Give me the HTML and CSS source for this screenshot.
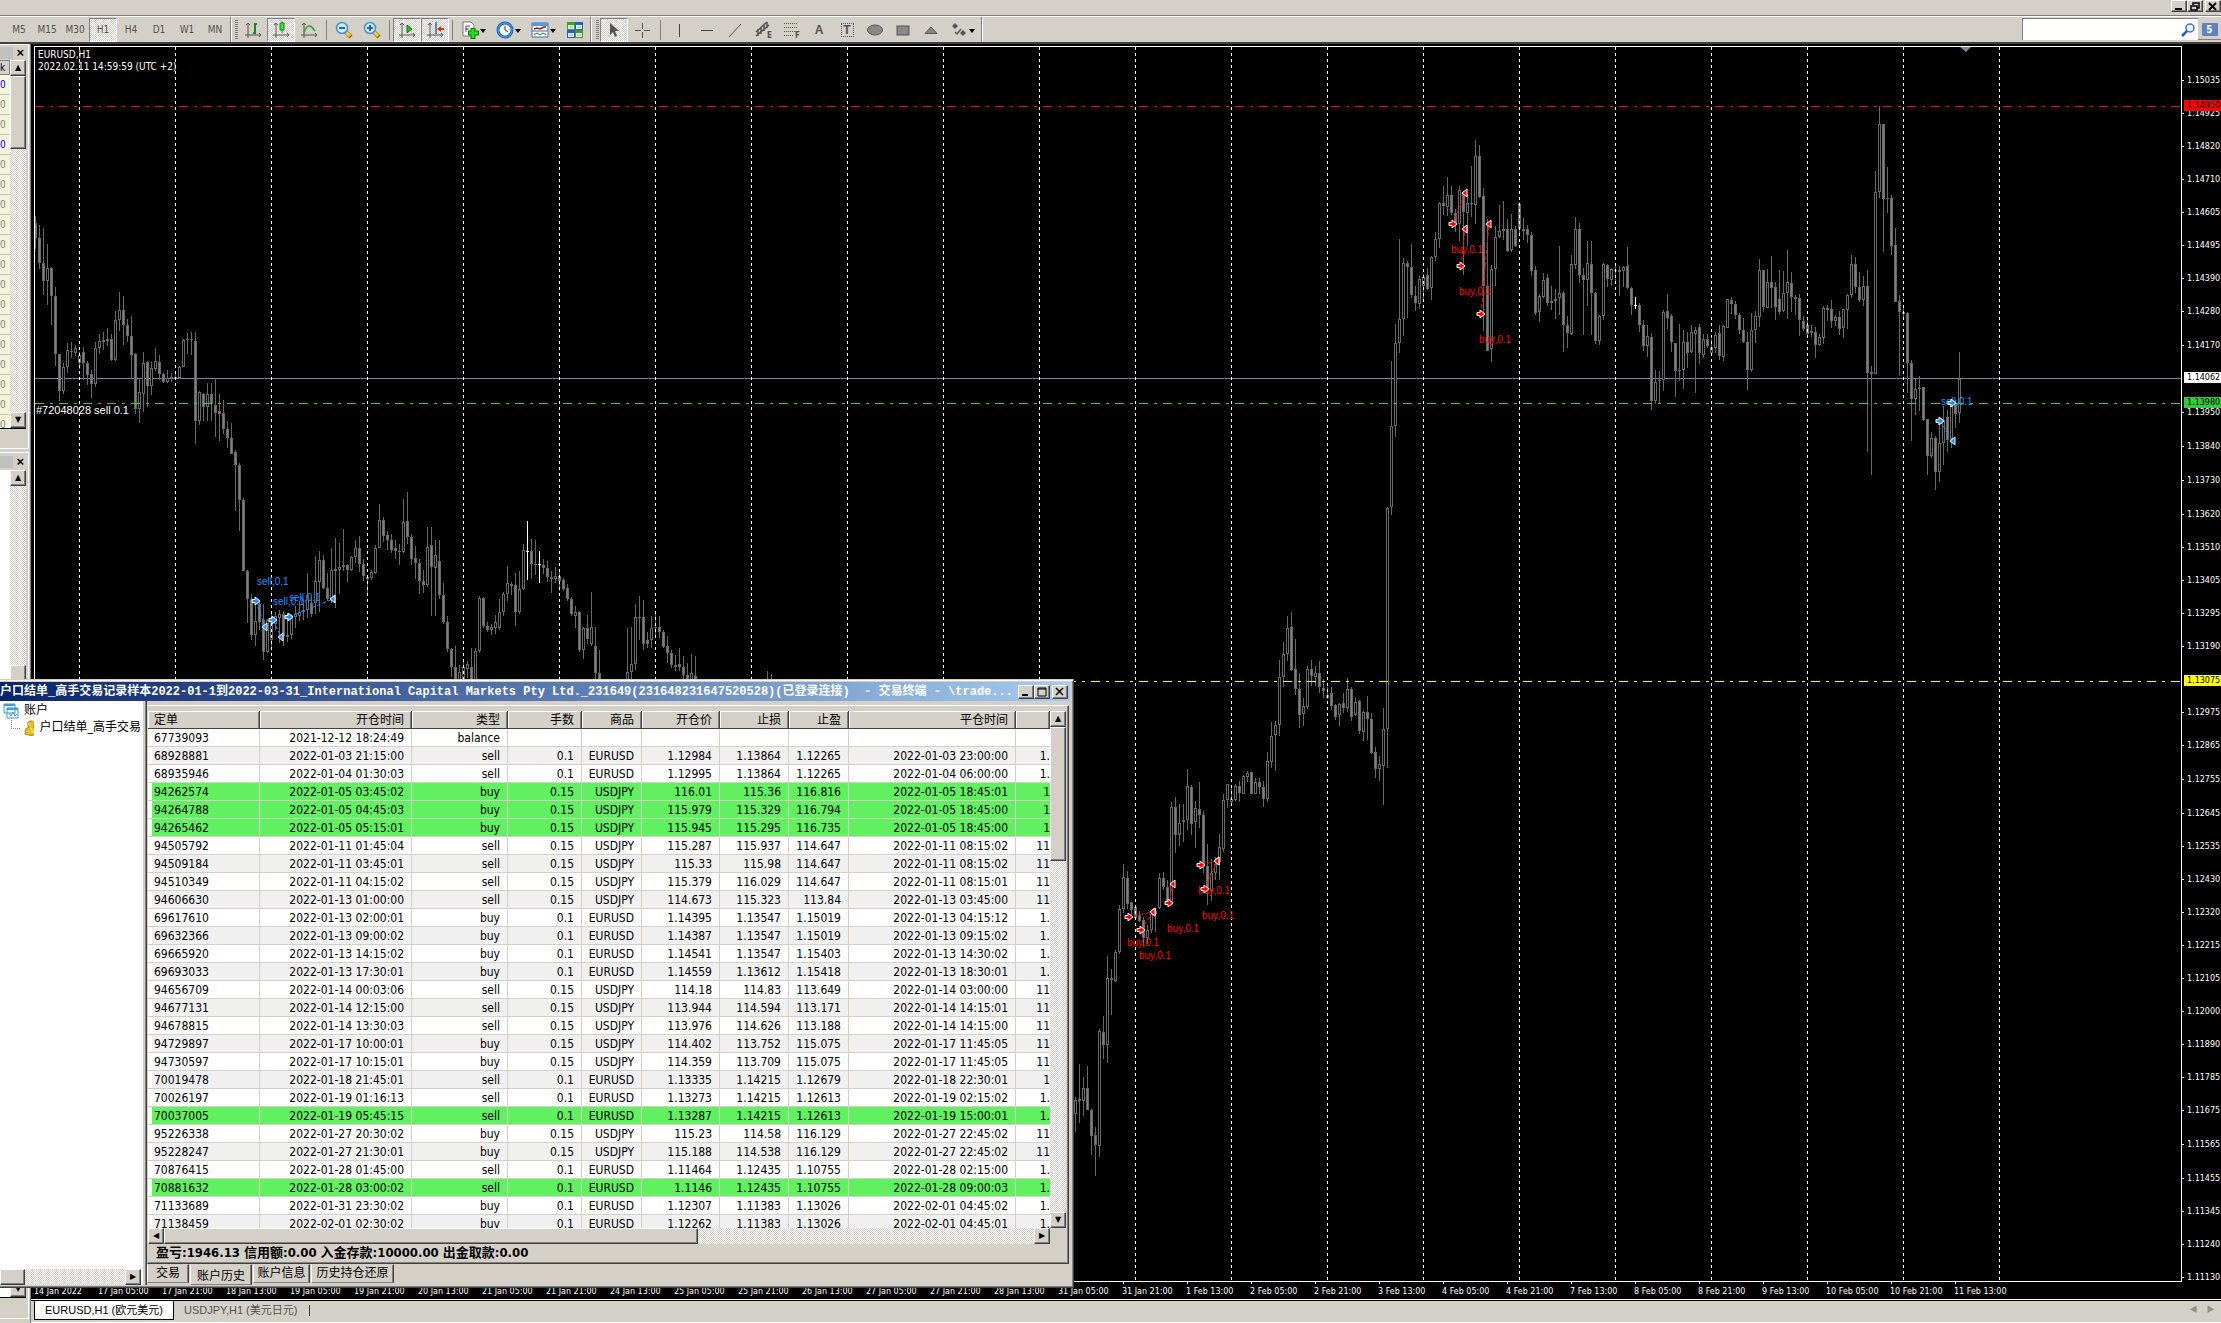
FILE: index.html
```html
<!DOCTYPE html>
<html lang="zh-CN">
<head>
<meta charset="utf-8">
<title>EURUSD,H1</title>
<link rel="stylesheet" href="styles.css">
</head>
<body>
<header class="caption">
  <button class="win" aria-label="Minimize"><svg width="10" height="8"><path d="M1 7h7" stroke="#000" stroke-width="2"/></svg></button>
  <button class="win" aria-label="Restore"><svg width="10" height="9"><path d="M3 3V1h6v5H7M3 1h6M1 4h6v4H1z" fill="none" stroke="#000" stroke-width="1.5"/></svg></button>
  <button class="win gap" aria-label="Close"><svg width="10" height="9"><path d="M1 1l7 7M8 1L1 8" stroke="#000" stroke-width="2"/></svg></button>
</header>
<nav class="toolbar">
  <div class="group first">
    <button>M5</button><button>M15</button><button>M30</button><button class="on">H1</button><button>H4</button><button>D1</button><button>W1</button><button>MN</button>
  </div>
  <div class="group">
    <i class="grip"></i>
    <button aria-label="Bar chart"><svg width="18" height="18"><path d="M4 2v15M1 14h16M2 4l2-2 2 2M15 12l2 2-2 2" fill="none" stroke="#555"/><path d="M9 12h2V3h2" fill="none" stroke="#188a18" stroke-width="2"/></svg></button>
    <button class="on" aria-label="Candlesticks"><svg width="18" height="18"><path d="M4 2v15M1 14h16M2 4l2-2 2 2M15 12l2 2-2 2" fill="none" stroke="#555"/><path d="M10 0v12" stroke="#188a18"/><path d="M8 2h4v7H8z" fill="#3fdc3f" stroke="#188a18"/></svg></button>
    <button aria-label="Line chart"><svg width="18" height="18"><path d="M4 2v15M1 14h16M2 4l2-2 2 2M15 12l2 2-2 2" fill="none" stroke="#555"/><path d="M4 12q4-13 11-2" fill="none" stroke="#3a9a3a" stroke-width="1.5"/></svg></button>
    <i class="sep"></i>
    <button aria-label="Zoom out"><svg width="18" height="18"><path d="M10 10l6 6" stroke="#8a6a10" stroke-width="4"/><path d="M10 10l5 5" stroke="#f0d040" stroke-width="3"/><circle cx="7" cy="7" r="5.5" fill="#c6ecff" stroke="#4a90c8" stroke-width="1.5"/><path d="M4 7h6" stroke="#2468a8" stroke-width="2"/></svg></button>
    <button aria-label="Zoom in"><svg width="18" height="18"><path d="M10 10l6 6" stroke="#8a6a10" stroke-width="4"/><path d="M10 10l5 5" stroke="#f0d040" stroke-width="3"/><circle cx="7" cy="7" r="5.5" fill="#c6ecff" stroke="#4a90c8" stroke-width="1.5"/><path d="M4 7h6M7 4v6" stroke="#2468a8" stroke-width="2"/></svg></button>
    <i class="sep"></i>
    <button class="on" aria-label="Auto scroll"><svg width="18" height="18"><path d="M4 2v15M1 14h16M2 4l2-2 2 2M15 12l2 2-2 2" fill="none" stroke="#555"/><path d="M9 4l5 4-5 4z" fill="#2cc02c" stroke="#127012"/></svg></button>
    <button class="on" aria-label="Chart shift"><svg width="18" height="18"><path d="M4 2v15M1 14h16M2 4l2-2 2 2M15 12l2 2-2 2" fill="none" stroke="#555"/><path d="M10 1v12" stroke="#2070a0" stroke-width="1.5"/><path d="M18 7h-3V5l-4 3 4 3V9h3z" fill="#c03810"/></svg></button>
    <i class="sep"></i>
    <button class="drop" aria-label="Indicators"><svg width="18" height="18"><path d="M2 1h8l3 3v11H2z" fill="#fff" stroke="#777"/><path d="M5 11V5h4M4 8h4" fill="none" stroke="#555"/><path d="M12 7v11M7 12h11" stroke="#0a7a0a" stroke-width="5"/><path d="M12 8v9M8 12h9" stroke="#28d828" stroke-width="3"/></svg></button>
    <button class="drop" aria-label="Periods"><svg width="18" height="18"><circle cx="9" cy="9" r="7" fill="#fff" stroke="#1860c0" stroke-width="3"/><circle cx="9" cy="9" r="7" fill="none" stroke="#5aa8f0"/><path d="M9 5v4l3 2" fill="none" stroke="#333"/></svg></button>
    <button class="drop" aria-label="Templates"><svg width="18" height="18"><path d="M1 2h16v14H1z" fill="#fff" stroke="#3070b0"/><path d="M1 2h16v3H1z" fill="#5898e0"/><path d="M1 10h16" stroke="#3070b0"/><path d="M3 8l3-1 3 1 4-2h2" fill="none" stroke="#902010" stroke-width="1.5"/><path d="M3 14l3-2 3 2 3-2 3 2" fill="none" stroke="#188a18"/></svg></button>
    <button aria-label="Tile windows"><svg width="18" height="18"><path d="M1 1h8v8H1zM9 9h8v8H9z" fill="#40a010"/><path d="M9 1h8v8H9zM1 9h8v8H1z" fill="#2060d0"/><path d="M2 4h6v4H2zM10 4h6v4h-6zM2 12h6v4H2zM10 12h6v4h-6z" fill="#e8f4ff"/><path d="M3 6h4M11 6h4M3 14h4M11 14h4" stroke="#8ab"/></svg></button>
  </div>
  <div class="group draw">
    <i class="grip"></i>
    <button class="on" aria-label="Cursor"><svg width="18" height="18"><path d="M5 2v12l3-3 2 5 2-1-2-5h4z" fill="#555"/></svg></button>
    <button aria-label="Crosshair"><svg width="18" height="18"><path d="M9.500 2v6M9.500 11v6M2 9.500h6M11 9.500h6" stroke="#555"/></svg></button>
    <i class="sep"></i>
    <button aria-label="Vertical line"><svg width="18" height="18"><path d="M9.500 3v13" stroke="#444"/></svg></button>
    <button aria-label="Horizontal line"><svg width="18" height="18"><path d="M3 9.500h12" stroke="#444"/></svg></button>
    <button aria-label="Trendline"><svg width="18" height="18"><path d="M3 16L15 3" stroke="#555"/></svg></button>
    <button aria-label="Equidistant channel"><svg width="18" height="18"><path d="M2 11L13 1M2 15L15 4M4 8v7M7 6v7M10 3v7M13 1v6" stroke="#555" stroke-width="1.500"/></svg><small>E</small></button>
    <button aria-label="Fibonacci"><svg width="18" height="18"><path d="M2 2.500h14M2 6.500h14M2 10.500h14M2 14.500h9" stroke="#555" stroke-dasharray="1 1"/></svg><small>F</small></button>
    <button class="letter">A</button>
    <button class="letter"><span class="dots">T</span></button>
    <button aria-label="Ellipse"><svg width="18" height="18"><ellipse cx="9" cy="9" rx="7.500" ry="5" fill="#888" stroke="#555"/></svg></button>
    <button aria-label="Rectangle"><svg width="18" height="18"><rect x="3" y="5" width="12" height="9" fill="#888" stroke="#555"/></svg></button>
    <button aria-label="Triangle"><svg width="18" height="18"><path d="M9 6l6 6.500H3z" fill="#888" stroke="#555"/></svg></button>
    <button class="drop" aria-label="Arrows"><svg width="18" height="18"><path d="M5 2l3 3-3 3-3-3zM13 9l3 3-3 3-3-3z" fill="#555"/><path d="M5 11l2 2 4-5" fill="none" stroke="#555" stroke-width="1.500"/></svg></button>
  </div>
  <label class="search"><input type="text" aria-label="Search"><svg width="14" height="14"><circle cx="9" cy="5" r="4" fill="#e8f2ff" stroke="#3a6fd0" stroke-width="1.500"/><path d="M6 8l-5 5" stroke="#2a52c0" stroke-width="2.500"/></svg></label>
  <button class="badge" aria-label="5 messages"><span>5</span></button>
</nav>
<main class="workspace">
  <aside class="dock">
    <section class="panel watch">
      <div class="panel-title"><i></i><button aria-label="Close">×</button></div>
      <div class="panel-body">
        <div class="cells" id="cells"><span class="head">k</span></div>
        <div class="vbar"><button class="arrow" aria-label="Up">▲</button><i class="thumb top"></i><i class="space"></i><button class="arrow" aria-label="Down">▼</button></div>
      </div>
    </section>
    <section class="panel nav">
      <div class="panel-title"><i></i><button aria-label="Close">×</button></div>
      <div class="panel-body">
        <div class="cells blank"></div>
        <div class="vbar"><button class="arrow" aria-label="Up">▲</button><i class="space upper"></i><i class="thumb"></i><i class="space"></i><button class="arrow" aria-label="Down">▼</button></div>
      </div>
    </section>
  </aside>
  <div class="stage">
    <svg class="chart" id="chart" role="img" aria-label="EURUSD H1"></svg>
    <nav class="tabs"><a class="tab current" href="#eurusd">EURUSD,H1 (欧元美元)</a><a class="tab" href="#usdjpy">USDJPY,H1 (美元日元)</a><i class="bar"></i><span class="scroll">◀</span><span class="scroll">▶</span></nav>
  </div>
</main>
<section class="terminal">
  <header class="titlebar">
    <h1>户口结单_高手交易记录样本2022-01-1到2022-03-31_International Capital Markets Pty Ltd._231649(231648231647520528)(已登录连接)&nbsp; - 交易终端 - \trade...</h1>
    <button class="win" aria-label="Minimize"><svg width="10" height="9"><path d="M1 8h6" stroke="#000" stroke-width="2"/></svg></button>
    <button class="win" aria-label="Maximize"><svg width="10" height="10"><path d="M1 1h8v8H1zM1 2h8" fill="none" stroke="#000"/></svg></button>
    <button class="win gap" aria-label="Close"><svg width="10" height="9"><path d="M1 1l7 7M8 1L1 8" stroke="#000" stroke-width="1.500"/></svg></button>
  </header>
  <div class="split">
    <div class="tree">
      <ul>
        <li><svg width="16" height="16"><path d="M1 1h11v9H1zM4 5h11v10H4z" fill="#eef7ff" stroke="#4a9ad4"/><path d="M1 1h11v2H1zM4 5h11v2H4z" fill="#4a9ad4"/><path d="M6 10l2 3 2-4 2 4 2-2" fill="none" stroke="#4a9ad4"/></svg>账户</li>
        <li class="child"><svg width="14" height="16"><path d="M7 1c4 0 4 4 2 6 3 1 4 3 4 7q-6 3-12 0c0-4 1-6 4-7C3 5 3 1 7 1z" fill="#e8c020" stroke="#a88408"/><path d="M7 8l3 6M5 3q-1 2 1 3" stroke="#fff2a0" fill="none"/></svg>户口结单_高手交易</li>
      </ul>
      <div class="hbar"><i class="thumb"></i><i class="space"></i><button class="arrow" aria-label="Right">▶</button></div>
    </div>
    <div class="divider"></div>
    <div class="pane">
      <div class="frame">
        <div class="grid">
          <div class="rows">
            <table>
              <colgroup><col class="c1"><col class="c2"><col class="c3"><col class="c4"><col class="c5"><col class="c6"><col class="c7"><col class="c5"><col class="c9"><col></colgroup>
              <thead><tr><th>定单</th><th>开仓时间</th><th>类型</th><th>手数</th><th>商品</th><th>开仓价</th><th>止损</th><th>止盈</th><th>平仓时间</th><th></th></tr></thead>
              <tbody id="orders"></tbody>
            </table>
          </div>
          <div class="vbar"><button class="arrow" aria-label="Up">▲</button><i class="thumb"></i><i class="space"></i><button class="arrow" aria-label="Down">▼</button></div>
        </div>
        <div class="hbar"><button class="arrow" aria-label="Left">◀</button><i class="thumb"></i><i class="space"></i><button class="arrow" aria-label="Right">▶</button></div>
        <p class="summary">盈亏:1946.13 信用额:0.00 入金存款:10000.00 出金取款:0.00</p>
      </div>
      <div class="pages"><button>交易</button><button class="current">账户历史</button><button>账户信息</button><button class="wide">历史持仓还原</button></div>
    </div>
  </div>
</section>
<script src="app.js"></script>
</body>
</html>
```
FILE: styles.css
```css
* { box-sizing: border-box; }
:root { --face: #d4d0c8; --ui: "DejaVu Sans Condensed", "Noto Sans", "Noto Sans CJK SC", sans-serif; --dither: repeating-conic-gradient(#fff 0 25%, #d4d0c8 0 50%) 0 0 / 2px 2px; }
body { margin: 0; height: 100vh; display: flex; flex-direction: column; overflow: hidden; background: var(--face); font: 12px/18px var(--ui); color: #000; position: relative; }
button { font: inherit; color: inherit; padding: 0; border: 0; background: none; }
svg { display: block; }
.win { width: 16px; height: 14px; display: grid; place-items: center; background: var(--face); border: 1px solid; border-color: #fff #404040 #404040 #fff; box-shadow: inset -1px -1px #808080; }
.caption { height: 16px; flex: none; display: flex; justify-content: flex-end; align-items: flex-start; border-bottom: 1px solid #808080; }
.caption .win { height: 12px; }
.gap { margin-left: 2px; }

.toolbar { height: 28px; flex: none; display: flex; align-items: stretch; border-top: 1px solid #fff; border-bottom: 2px solid #404040; font-size: 10px; color: #505050; }
.group { display: flex; align-items: center; border-right: 1px solid #808080; box-shadow: 1px 0 #fff; padding: 0 1px 0 4px; }
.group.first { padding-left: 5px; }
.group button { width: 28px; height: 24px; display: grid; place-items: center; border: 1px solid transparent; position: relative; }
.group button.on { background: var(--dither); border-color: #808080 #fff #fff #808080; }
.group .drop { width: 35px; justify-content: start; padding-left: 4px; }
.drop::after { content: ""; position: absolute; right: 4px; top: 10px; border: 3px solid transparent; border-top: 4px solid #000; border-bottom: 0; }
.group small { position: absolute; right: 4px; bottom: 1px; font: bold 8px/8px var(--ui); }
.letter { font: bold 12px/14px "Liberation Sans", sans-serif; }
.dots { border: 1px dotted #555; width: 13px; height: 14px; line-height: 13px; }
.grip { width: 3px; height: 20px; margin: 0 1px 0 0; background: repeating-linear-gradient(#808080 0 1px, transparent 1px 2px); }
.sep { width: 1px; height: 20px; background: #808080; margin: 0 3px; }
.draw { padding-left: 5px; }
.draw .sep { margin: 0 4px; }
.search { margin: 1px 0 2px auto; width: 176px; display: flex; align-items: center; background: #fff; border-top: 1px solid #808080; border-left: 1px solid #808080; padding-right: 3px; }
.search input { flex: 1; min-width: 0; height: 18px; border: 0; background: none; outline: 0; }
.badge { width: 23px; margin: 2px 0; display: grid; place-items: center; border-bottom: 1px solid #808080; }
.badge span { width: 16px; height: 13px; border-radius: 1px; background: #6480b8; color: #fff; font: bold 10px/13px var(--ui); }

.workspace { flex: 1; min-height: 0; display: flex; }
.dock { width: 31px; display: flex; flex-direction: column; gap: 3px; padding-right: 1px; border-right: 1px solid #808080; }
.panel { display: flex; flex-direction: column; border: 1px solid #fff; border-left: 0; padding-right: 2px; }
.watch { flex: 0 0 405px; }
.watch .panel-body { flex: 0 0 369px; border-bottom: 1px solid #000; }
.nav { flex: 1; margin-bottom: 4px; min-height: 0; }
.nav .panel-body { margin-bottom: 20px; border-bottom: 1px solid #000; }
.panel-title { height: 15px; flex: none; display: flex; align-items: center; justify-content: space-between; padding-right: 2px; }
.nav .panel-title { height: 17px; }
.panel-title i { width: 13px; height: 12px; background: #c0c0c0; }
.panel-title button { font: bold 13px/14px "Liberation Sans", sans-serif; }
.panel-body { flex: 1; min-height: 0; display: flex; overflow: hidden; }
.cells { width: 10px; flex: none; overflow: hidden; background: #f5f5dc; display: flex; flex-direction: column; font-size: 10px; color: #808080; }
.cells.blank { background: #fff; }
.cells span { height: 20px; flex: none; line-height: 20px; border-bottom: 1px solid #c0c0c0; }
.cells .head { height: 15px; line-height: 14px; background: var(--face); border: 1px solid #808080; border-left: 0; color: #000; }
.cells .blue { color: #0000e0; }

.vbar { width: 16px; flex: none; display: flex; flex-direction: column; background: var(--dither); }
.hbar { height: 16px; flex: none; display: flex; background: var(--dither); }
.arrow { width: 16px; height: 16px; flex: none; display: grid; place-items: center; font: 8px/8px "DejaVu Sans", sans-serif; }
.arrow, .thumb { background: var(--face); border: 1px solid; border-color: #fff #404040 #404040 #fff; box-shadow: inset -1px -1px #808080; }
.thumb { flex: none; }
.space { flex: 1; }
.thumb.top { height: 73px; }
.nav .upper { flex: 0 0 179px; }
.nav .thumb { height: 60px; }

.stage { flex: 1; min-width: 0; display: flex; flex-direction: column; }
.chart { flex: 1; min-height: 0; width: 100%; background: #000; }
.chart .axis { font: 8px "DejaVu Sans", sans-serif; fill: #fff; }
.chart .note { font: 10px var(--ui); fill: #fff; }
.chart .ticket { font: 11px "Liberation Sans", sans-serif; fill: #fff; }
.chart .trade { font: 10px "Liberation Sans", sans-serif; }
.tabs { height: 24px; flex: none; display: flex; align-items: stretch; border-top: 1px solid #fff; box-shadow: inset 0 1px #000; padding: 1px 2px 2px 3px; border-bottom: 1px solid #fff; font: 11px/18px "Liberation Sans", "Noto Sans CJK SC", sans-serif; }
.tab { color: #505050; text-decoration: none; padding: 0 10px; }
.tab.current { background: #fff; color: #000; border: 1px solid #000; border-top: 0; }
.tabs .bar { width: 1px; margin: 4px auto 4px 2px; background: #404040; }
.scroll { width: 17px; font-size: 8px; color: #909090; text-align: center; }

.terminal { position: absolute; left: 0; top: 679px; width: 1074px; height: 609px; display: flex; flex-direction: column; background: var(--face); padding: 2px 2px 2px 0; border: 1px solid; border-color: var(--face) #404040 #404040 var(--face); border-left: 0; box-shadow: inset 0 1px #fff, inset -1px -1px #808080; }
.titlebar { height: 19px; flex: none; display: flex; align-items: center; margin-right: 1px; padding-right: 2px; background: linear-gradient(90deg, #0a246a, #a6caf0); }
.titlebar h1 { flex: 1; min-width: 0; margin: 0; overflow: hidden; white-space: nowrap; color: #fff; font: bold 12px/18px "Liberation Mono", "Noto Sans CJK SC", monospace; }
.split { flex: 1; min-height: 0; display: flex; }
.tree { width: 141px; flex: none; display: flex; flex-direction: column; background: #fff; overflow: hidden; }
.tree ul { flex: 1; margin: 0; padding: 1px 0 0 3px; list-style: none; }
.tree li { display: flex; align-items: center; gap: 5px; height: 17px; white-space: nowrap; font: 12px/17px var(--ui); }
.tree .child { margin-left: 8px; gap: 6px; }
.child::before { content: ""; width: 8px; flex: none; height: 10px; border: 1px dotted #808080; border-width: 0 0 1px 1px; margin: -8px -2px 0 0; }
.tree .thumb { width: 25px; }
.divider { width: 6px; flex: none; border-left: 2px solid #fff; border-right: 1px solid #404040; box-shadow: inset -1px 0 #808080; }
.pane { flex: 1; min-width: 0; display: flex; flex-direction: column; }
.frame { flex: 1; min-height: 0; display: flex; flex-direction: column; margin: 4px 2px 0 0; padding: 5px 2px 0 0; border: 1px solid; border-color: #fff #404040 #404040 transparent; box-shadow: inset -1px -1px #808080; }
.grid { flex: 1; min-height: 0; display: flex; }
.rows { flex: 1; min-width: 0; overflow: hidden; background: #fff; }
.grid .thumb { height: 134px; }
table { width: 100%; table-layout: fixed; border-collapse: separate; border-spacing: 0; }
.c1 { width: 112px; } .c2 { width: 152px; } .c3 { width: 96px; } .c4 { width: 74px; } .c5 { width: 60px; } .c6 { width: 78px; } .c7 { width: 69px; } .c9 { width: 167px; }
th, td { height: 18px; padding: 2px 7px 0 0; text-align: right; font-weight: normal; line-height: 15px; white-space: nowrap; border-right: 1px solid #d4d0c8; border-bottom: 1px solid #d4d0c8; overflow: hidden; }
th { background: var(--face); border-color: #404040; box-shadow: inset 1px 1px #fff, inset -1px 0 #808080; }
th:first-child, td:first-child { text-align: left; padding-left: 6px; }
td:first-child { box-shadow: inset 4px 0 #fff; }
td:last-child { padding-right: 0; border-right: 0; }
tbody tr:nth-child(even) { background: #f0f0f0; }
tbody .win-row { background: #60f060 !important; }
.frame .hbar { margin-right: 16px; }
.frame .hbar .thumb { width: 534px; }
.summary { height: 19px; margin: 0; padding-left: 8px; font: bold 13px/18px var(--ui); }
.pages { height: 21px; flex: none; display: flex; align-items: flex-start; gap: 1px; }
.pages button { height: 19px; width: 57px; border: 1px solid; border-color: transparent #404040 #808080 #fff; line-height: 17px; white-space: nowrap; box-shadow: inset -1px 0 #808080; }
.pages button:first-child { width: 42px; }
.pages .current { height: 21px; width: 62px; line-height: 22px; }
.pages .wide { width: 83px; }
```
FILE: app.js
```js
// Candles: high, body top, body bottom, low; f = falling, h = rising, w = doji. Four pixels apart.
const series = [
  [35, `216 223 238 249 f,225 238 263 269 f,228 263 281 295 f,244 268 281 305 h,267 268 296 325 f,287 296 354 366 f,354 354 391 401 f,363 367 391 394 h,343 350 367 373 h,342 351 352 358 f,345 348 353 356 h,352 355 363 369 h,347 352 363 380 f,361 363 375 385 f,370 374 384 398 f,342 348 384 387 h,334 341 348 354 h,332 340 342 350 f,328 339 341 346 h,334 339 360 361 f,311 320 360 361 h,292 310 320 331 h,296 310 325 345 f,319 325 336 342 f,316 336 355 378 f,353 354 409 414 f,378 392 409 423 h,352 363 394 412 h,361 362 386 407 f,362 368 386 395 h,348 361 369 371 h,355 362 374 380 f,373 374 382 383 f,370 378 382 383 h,373 377 378 382 f,374 377 378 380 f,366 367 378 379 h,339 340 367 367 h,333 339 340 354 f,332 339 340 355 f,332 341 421 444 f,391 392 421 425 h,393 394 407 421 f,383 394 407 421 h,383 394 404 421 f,378 405 413 437 f,394 411 414 441 f,400 413 429 434 f,421 429 438 448 f,423 438 454 454 f,450 452 465 511 f,463 465 500 531 f,498 500 571 571 f,570 571 599 623 f,594 599 635 640 f,597 621 635 646 h,600 604 622 630 f,604 620 652 660 f,619 620 652 653 h,612 622 640 648 h,612 616 624 630 h,610 614 618 643 h,611 614 636 646 f,613 635 637 642 f,614 616 635 639 h,606 614 617 628 h,601 612 616 621 h,599 610 612 620 f,573 595 610 618 h,597 603 614 617 f,556 581 603 614 h,551 560 582 612 h,555 560 588 589 f,573 588 599 601 f,548 570 599 603 h,538 569 571 608 f,543 567 570 594 h,529 565 567 571 f,564 565 570 582 f,556 557 570 571 h,540 548 557 563 h,536 548 564 572 f,559 564 576 581 f,576 577 579 595 f,570 572 578 580 h,545 548 573 574 h,504 520 548 548 h,517 520 536 542 f,531 535 540 550 f,534 540 550 553 f,540 548 551 559 f,544 551 552 565 f,499 522 552 553 h,492 521 537 544 f,534 537 559 565 f,546 558 563 579 f,559 563 581 594 f,570 581 585 593 f,527 547 585 587 h,527 545 567 616 f,540 555 568 616 h,540 561 595 599 f,583 595 622 624 f,616 622 649 652 f,648 649 667 677 f,646 667 681 681 f,665 672 690 690 h,661 667 680 690 h,661 664 669 678 h,648 667 690 690 f,648 651 681 690 h,596 598 651 653 h,597 598 626 628 f,622 626 630 632 f,624 627 630 635 h,615 622 628 634 h,599 612 628 630 h,592 594 612 616 h,566 583 594 601 h,582 584 586 595 f,573 585 612 626 f,571 589 612 614 h,544 550 589 590 h,521 551 552 580 w,539 551 564 579 f,540 564 565 575 f,551 564 565 583 w,559 565 568 574 f,561 568 577 582 f,571 577 579 593 h,567 576 579 583 h,571 576 581 591 f,578 580 589 591 f,584 588 599 601 f,597 599 614 616 f,606 612 616 628 h,611 612 650 652 f,627 628 650 659 h,615 628 639 644 f,592 627 644 646 h,627 646 673 680 f,650 673 690 690 f`],
  [627, `628 672 690 690 h,627 664 672 685 h,604 617 664 670 h,596 617 618 640 f,600 617 644 650 f,632 640 644 648 f,616 628 640 648 h,614 627 628 638 f,616 627 632 638 f,630 632 647 648 f,636 646 653 663 f,650 653 665 668 f,655 665 667 671 f,648 664 667 671 f,656 667 675 690 f,663 675 690 690 f,654 673 690 690 h,656 676 690 690 f`],
  [767, `671 684 690 690 h,674 685 690 690 f`],
  [1075, `1097 1100 1114 1132 h,1064 1099 1101 1123 f,1077 1088 1101 1116 h,1066 1088 1110 1110 f,1109 1110 1136 1155 f,1127 1135 1145 1176 f,1029 1031 1146 1157 h,1016 1032 1045 1059 f,956 978 1045 1063 h,969 978 980 1015 f,950 952 981 982 h,905 909 952 954 h,864 877 909 913 h,871 878 904 909 f,902 902 910 915 f,906 907 918 919 f,911 916 921 922 f,917 920 938 947 f,925 930 938 944 h,910 914 930 933 h,908 911 914 932 h,873 878 908 909 h,872 878 887 890 f,880 887 903 904 f,802 807 903 904 h,797 807 835 853 f,804 823 835 846 h,804 820 822 842 h,769 786 820 830 h,785 787 824 835 f,801 808 822 848 h,782 809 815 828 f,811 815 866 873 f,844 866 889 905 f,859 873 891 901 h,857 864 873 880 h,834 847 862 880 h,794 800 849 852 h,784 784 800 808 h,786 799 802 803 h,784 786 800 801 h,781 786 793 802 f,775 776 794 794 h,771 773 777 782 h,772 772 794 794 f,778 782 794 794 h,778 782 787 794 f,781 787 799 807 f,752 761 799 802 h,722 736 762 768 h,721 725 735 771 h,660 677 725 736 h,642 654 677 687 h,616 628 654 661 h,612 627 670 671 f,639 669 689 695 f,673 689 715 728 f,698 706 714 726 h,666 669 707 709 h,660 669 676 686 f,666 673 677 686 h,661 673 687 693 f,679 688 691 698 f,687 695 698 699 h,687 693 706 710 f,704 705 717 720 f,703 704 715 726 h,693 703 708 713 f,678 689 708 712 h,687 689 717 721 f,698 702 715 716 h,700 701 731 734 f,711 712 732 741 h,696 712 719 740 f,713 719 753 754 f,747 752 769 778 f,756 764 769 781 h,708 729 766 805 h,507 508 729 768 h,361 426 507 515 h,324 343 426 437 h,239 319 343 353 h,258 263 319 336 h,261 263 267 318 f,244 267 295 298 f,286 296 303 311 f,276 279 304 309 h,274 277 286 302 h,268 275 289 290 f,256 257 288 300 h,232 239 257 261 h,202 203 239 248 h,186 203 206 215 f,177 195 207 216 h,186 195 213 215 f,209 213 224 232 f,186 190 224 241 h,191 192 212 275 f,194 203 213 246 h,166 203 204 217 f,140 156 205 224 h,145 156 197 198 f,188 196 286 331 f,219 286 351 351 f,265 269 349 362 h,226 237 269 286 h,205 231 237 238 h,201 229 231 240 f,219 229 251 252 f,214 229 250 252 h,226 229 246 247 f,202 204 229 235 f,218 229 231 240 f,225 229 235 243 f,232 235 271 276 f,266 270 313 315 f,294 296 312 322 h,273 280 297 298 h,274 278 303 306 f,286 301 303 310 h,289 299 301 319 f,246 293 298 315 h,291 293 325 352 f,316 325 333 348 f,255 264 334 335 h,217 229 265 269 h,223 229 275 283 f,268 275 280 335 f,241 263 280 306 h,241 264 293 335 f,292 293 341 344 f,315 316 341 345 h,263 264 316 320 h,264 265 279 287 f,268 269 280 286 h,263 270 271 281 f,266 270 272 296 f,266 267 271 287 h,247 266 288 289 f,287 288 305 315 f,297 305 306 309 w,303 305 325 332 f,320 325 346 351 f,325 336 346 357 h,333 337 401 410 f,370 382 401 404 h,371 380 381 403 f,310 312 380 391 h,294 311 318 329 f,314 316 342 352 f,343 343 371 397 f,324 370 371 381 f,330 342 370 389 h,332 342 353 368 f,325 332 352 353 h,327 330 334 393 h,324 327 353 364 f,334 339 355 358 h,334 339 346 348 f,339 347 353 354 h,332 335 348 353 h,325 333 356 360 f,325 326 357 361 h,299 299 328 328 h,297 300 304 314 f,301 304 315 319 f,313 315 330 334 f,318 330 342 343 f,332 342 370 390 f,313 330 370 372 h,311 316 330 343 h,259 270 317 327 h,270 270 307 312 f,269 282 308 308 h,256 282 288 308 f,282 287 307 320 f,270 299 312 315 f,271 293 311 312 h,250 282 293 319 h,272 283 297 312 f,295 297 299 315 f,294 298 320 336 f,316 321 329 331 f,318 325 334 335 f,325 331 333 337 f,327 332 345 358 f,334 337 345 346 h,306 308 338 344 h,305 308 310 321 f,300 309 321 328 f,315 317 321 326 h,311 317 329 335 f,309 309 328 338 h,294 295 310 329 h,255 264 295 298 h,257 264 287 293 f,272 287 300 302 f,276 286 300 306 h,270 286 373 452 f,366 372 374 475 f,171 192 374 374 h,106 124 192 198 h,124 124 199 252 f,167 198 199 213 f,195 198 246 255 f,228 245 302 302 f,295 301 312 376 f,305 312 314 320 f,312 313 363 393 f,360 363 399 441 f,378 389 399 415 h,376 388 389 411 f,387 387 420 421 f,419 419 456 475 f,432 438 456 458 h,436 438 472 490 f,423 443 472 482 h,406 420 443 465 h,410 417 440 452 f,400 405 440 448 h,400 404 414 428 f,352 379 413 423 h`]
];
const prices = [['1.15035',80],['1.14925',113],['1.14820',146],['1.14710',179],['1.14605',212],['1.14495',245],['1.14390',278],['1.14280',311],['1.14170',345],['1.13950',412],['1.13840',446],['1.13730',480],['1.13620',514],['1.13510',547],['1.13405',580],['1.13295',613],['1.13190',646],['1.12975',712],['1.12865',745],['1.12755',779],['1.12645',813],['1.12535',846],['1.12430',879],['1.12320',912],['1.12215',945],['1.12105',978],['1.12000',1011],['1.11890',1044],['1.11785',1077],['1.11675',1110],['1.11565',1144],['1.11455',1178],['1.11345',1211],['1.11240',1244],['1.11130',1277]];
const levels = [['1.14950',106,'#ff0000','#000'],['1.13980',403,'#32cd32','#000'],['1.13075',681,'#ffff00','#000']];
const separators = Array.from({ length: 21 }, (_, i) => 79 + 96 * i);
const times = '14 Jan 2022,17 Jan 05:00,17 Jan 21:00,18 Jan 13:00,19 Jan 05:00,19 Jan 21:00,20 Jan 13:00,21 Jan 05:00,21 Jan 21:00,24 Jan 13:00,25 Jan 05:00,25 Jan 21:00,26 Jan 13:00,27 Jan 05:00,27 Jan 21:00,28 Jan 13:00,31 Jan 05:00,31 Jan 21:00,1 Feb 13:00,2 Feb 05:00,2 Feb 21:00,3 Feb 13:00,4 Feb 05:00,4 Feb 21:00,7 Feb 13:00,8 Feb 05:00,8 Feb 21:00,9 Feb 13:00,10 Feb 05:00,10 Feb 21:00,11 Feb 13:00'.split(',');
// Trades: entry x, y, exit x, y, label x, y
const sells = [[256,601,265,627,257,581],[273,620,281,637,273,601],[289,617,333,599,289,597],[1940,421,1953,441,0,0],[1952,403,0,0,1941,401]];
const buys = [[1129,917,1153,912,1127,942],[1141,930,1153,912,1139,955],[1169,903,1173,884,1167,928],[1201,865,1217,861,1198,890],[1205,889,1217,861,1202,915],[1453,224,1465,193,1451,249],[1461,266,1465,229,1459,291],[1481,314,1489,224,1479,339]];

function drawChart() {
  const svg = document.getElementById('chart');
  const left = 31, top = 44;
  const W = svg.clientWidth + left, H = svg.clientHeight + top;
  const right = W - 40, bottom = H - 18;
  const out = [];
  const rect = (x, y, w, h, c) => out.push(`<rect x="${x}" y="${y}" width="${w}" height="${h}" fill="${c}"/>`);
  const text = (x, y, s, cls, c) => out.push(`<text x="${x}" y="${y}" class="${cls}"${c ? ` style="fill:${c}"` : ''}>${s}</text>`);
  const line = (x1, y1, x2, y2, c, d) => out.push(`<path d="M${x1} ${y1}L${x2} ${y2}" stroke="${c}" fill="none" stroke-dasharray="${d}"/>`);
  rect(35, 378, right - 35, 1, '#778899');
  for (const [start, data] of series) data.split(',').forEach((row, i) => {
    const [hi, t, b, lo, kind] = row.split(' ');
    const x = start + 4 * i, g = kind === 'w' ? '#fff' : '#696969';
    rect(x, +hi, 1, Math.max(1, lo - hi), g);
    rect(x - 1, +t, 3, Math.max(1, b - t), g);
    if (kind !== 'w' && b - t > 2) rect(x, +t + 1, 1, b - t - 2, kind === 'h' ? '#000' : '#808080');
  });
  for (const x of separators) line(x + .5, 47, x + .5, bottom, '#fff', '3 3');
  for (const [, y, c] of levels) line(35, y + .5, right, y + .5, c, '9 6 3 6');
  rect(34, 46, right - 33, 1, '#fff');
  rect(34, 46, 1, bottom - 46, '#fff');
  rect(right, 46, 1, bottom - 45, '#fff');
  rect(34, bottom, right - 33, 1, '#fff');
  out.push('<path d="M1960 47h11l-5 5z" fill="#778899"/>');
  for (const [p, y] of prices) { rect(right, y, 3, 1, '#fff'); text(right + 6, y + 3, p, 'axis'); }
  for (const [p, y, c, f] of [...levels, ['1.14062', 378, '#fff', '#000']]) { rect(right + 3, y - 6, 38, 11, c); text(right + 6, y + 2, p, 'axis', f); }
  times.forEach((s, i) => { rect(35 + 64 * i, bottom, 1, 3, '#fff'); text(34 + 64 * i, bottom + 13, s, 'axis'); });
  text(38, 58, 'EURUSD,H1', 'note');
  text(38, 70, '2022.02.11 14:59:59 (UTC +2)', 'note');
  text(36, 414, '#72048028 sell 0.1', 'ticket');
  for (const [list, c, name] of [[sells, '#1e90ff', 'sell,0.1'], [buys, '#ff0000', 'buy,0.1']]) {
    for (const [a, b, x, y, lx, ly] of list) {
      if (x) line(a, b, x, y, c, '4 2');
      if (lx) text(lx, ly + 4, name, 'trade', c);
    }
    for (const [a, b, x, y] of list) {
      out.push(`<path d="M${a - 4} ${b - 1.5}h3v-2.500l5 4-5 4v-2.500h-3z" fill="${c}" stroke="#fff"/>`);
      if (x) out.push(`<path d="M${x - 3} ${y}l5-4v8z" fill="${c}" stroke="#fff"/>`);
    }
  }
  svg.innerHTML = `<g transform="translate(${-left} ${-top})">${out.join('')}</g>`;
}
drawChart();
addEventListener('resize', drawChart);

const orders = `67739093|2021-12-12 18:24:49|balance|||||||
68928881|2022-01-03 21:15:00|sell|0.1|EURUSD|1.12984|1.13864|1.12265|2022-01-03 23:00:00|1.
68935946|2022-01-04 01:30:03|sell|0.1|EURUSD|1.12995|1.13864|1.12265|2022-01-04 06:00:00|1.
94262574|2022-01-05 03:45:02|buy|0.15|USDJPY|116.01|115.36|116.816|2022-01-05 18:45:01|1|*
94264788|2022-01-05 04:45:03|buy|0.15|USDJPY|115.979|115.329|116.794|2022-01-05 18:45:00|1|*
94265462|2022-01-05 05:15:01|buy|0.15|USDJPY|115.945|115.295|116.735|2022-01-05 18:45:00|1|*
94505792|2022-01-11 01:45:04|sell|0.15|USDJPY|115.287|115.937|114.647|2022-01-11 08:15:02|11
94509184|2022-01-11 03:45:01|sell|0.15|USDJPY|115.33|115.98|114.647|2022-01-11 08:15:02|11
94510349|2022-01-11 04:15:02|sell|0.15|USDJPY|115.379|116.029|114.647|2022-01-11 08:15:01|11
94606630|2022-01-13 01:00:00|sell|0.15|USDJPY|114.673|115.323|113.84|2022-01-13 03:45:00|11
69617610|2022-01-13 02:00:01|buy|0.1|EURUSD|1.14395|1.13547|1.15019|2022-01-13 04:15:12|1.
69632366|2022-01-13 09:00:02|buy|0.1|EURUSD|1.14387|1.13547|1.15019|2022-01-13 09:15:02|1.
69665920|2022-01-13 14:15:02|buy|0.1|EURUSD|1.14541|1.13547|1.15403|2022-01-13 14:30:02|1.
69693033|2022-01-13 17:30:01|buy|0.1|EURUSD|1.14559|1.13612|1.15418|2022-01-13 18:30:01|1.
94656709|2022-01-14 00:03:06|sell|0.15|USDJPY|114.18|114.83|113.649|2022-01-14 03:00:00|11
94677131|2022-01-14 12:15:00|sell|0.15|USDJPY|113.944|114.594|113.171|2022-01-14 14:15:01|11
94678815|2022-01-14 13:30:03|sell|0.15|USDJPY|113.976|114.626|113.188|2022-01-14 14:15:00|11
94729897|2022-01-17 10:00:01|buy|0.15|USDJPY|114.402|113.752|115.075|2022-01-17 11:45:05|11
94730597|2022-01-17 10:15:01|buy|0.15|USDJPY|114.359|113.709|115.075|2022-01-17 11:45:05|11
70019478|2022-01-18 21:45:01|sell|0.1|EURUSD|1.13335|1.14215|1.12679|2022-01-18 22:30:01|1
70026197|2022-01-19 01:16:13|sell|0.1|EURUSD|1.13273|1.14215|1.12613|2022-01-19 02:15:02|1.
70037005|2022-01-19 05:45:15|sell|0.1|EURUSD|1.13287|1.14215|1.12613|2022-01-19 15:00:01|1.|*
95226338|2022-01-27 20:30:02|buy|0.15|USDJPY|115.23|114.58|116.129|2022-01-27 22:45:02|11
95228247|2022-01-27 21:30:01|buy|0.15|USDJPY|115.188|114.538|116.129|2022-01-27 22:45:02|11
70876415|2022-01-28 01:45:00|sell|0.1|EURUSD|1.11464|1.12435|1.10755|2022-01-28 02:15:00|1.
70881632|2022-01-28 03:00:02|sell|0.1|EURUSD|1.1146|1.12435|1.10755|2022-01-28 09:00:03|1.|*
71133689|2022-01-31 23:30:02|buy|0.1|EURUSD|1.12307|1.11383|1.13026|2022-02-01 04:45:02|1.
71138459|2022-02-01 02:30:02|buy|0.1|EURUSD|1.12262|1.11383|1.13026|2022-02-01 04:45:01|1.`;
document.getElementById('orders').innerHTML = orders.split('\n').map(row => {
  const cells = row.split('|');
  return `<tr${cells[10] ? ' class="win-row"' : ''}>${cells.slice(0, 10).map(c => `<td>${c}</td>`).join('')}</tr>`;
}).join('');
document.getElementById('cells').insertAdjacentHTML('beforeend',
  Array.from({ length: 18 }, (_, i) => `<span${i === 0 || i === 3 ? ' class="blue"' : ''}>0</span>`).join(''));
```
